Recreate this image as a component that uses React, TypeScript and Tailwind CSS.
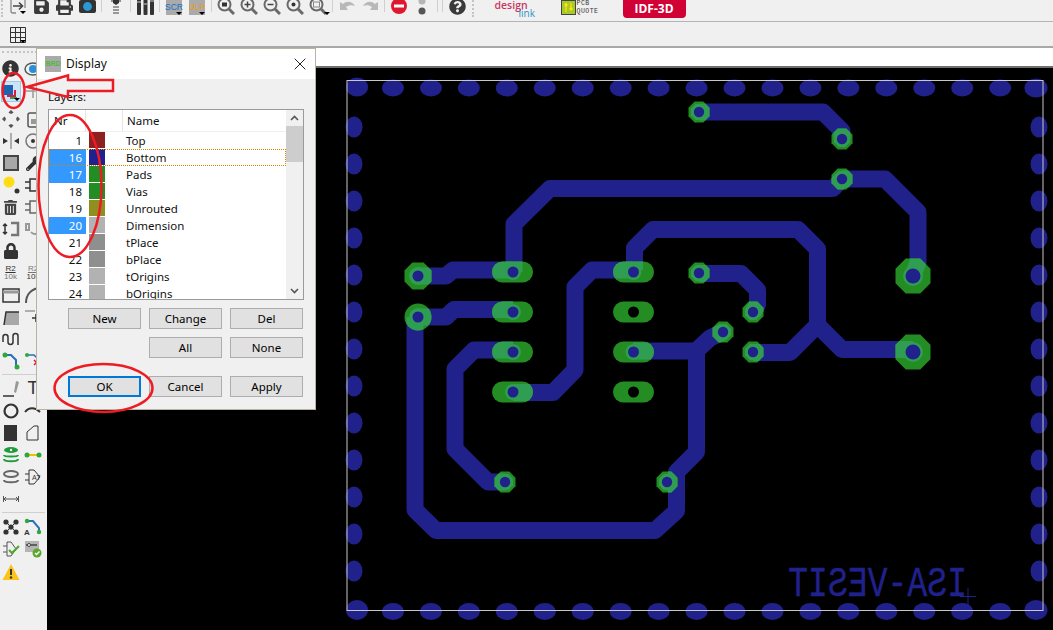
import type { ReactNode } from "react";
import { FaSave, FaPrint, FaInfoCircle, FaTrashAlt, FaLock, FaQuestionCircle, FaWrench } from "react-icons/fa";
import { X } from "lucide-react";

const BLUE = "#21218c";
const GREEN = "#238c23";
const LIGHT = "#2f9d52";
const INK = "#3a3a3a";

const octagon = (x: number, y: number, r: number) => {
  const k = r * 0.414;
  return [
    [x - k, y - r], [x + k, y - r], [x + r, y - k], [x + r, y + k],
    [x + k, y + r], [x - k, y + r], [x - r, y + k], [x - r, y - k],
  ].map((p) => p.join(",")).join(" ");
};

const traces = [
  "699,112 823,112 842,131 842,139",
  "842,179 885,179 918,212 918,262 913,276",
  "842,179 833,188.5 550,188.5 514,224 514,272",
  "418,276 446,276 453,270 513,270",
  "418,317 446,317 454,309.5 513,309.5",
  "415,317 415,510 436,530.5 655,530.5 676.5,511 676.5,472 696.5,452 696.5,351 633,351",
  "667,482 676,482",
  "696,351 710,338 723,332",
  "513,350 474,350 455,369 455,449 488,482 505,482",
  "513,392.5 553,392.5 575,370 575,287 592,270 634,270",
  "634.5,270 634.5,248 653,229.5 798,229.5 817.5,249 817.5,325 842,349.5 913,349.5",
  "817.5,325 790,352.5 753,352.5",
  "699,273.5 741,273.5 757.5,290 757.5,305 753,312",
];

const slots = [272, 312, 352, 392];
const vias: [number, number][] = [
  [699, 112], [842, 139], [842, 179], [699, 273], [753, 312], [723, 332], [753, 352], [505, 482], [667, 482],
];
const bigPads: [number, number][] = [[913, 276], [913, 352]];
const topRow = Array.from({ length: 17 }, (_, i) => 393 + i * 37.95);
const sideRow = Array.from({ length: 13 }, (_, i) => 127 + i * 37);

function Board() {
  const padShapes = (
    <>
      {[512.5, 633.5].flatMap((x) =>
        slots.map((y) => <rect key={`${x}-${y}`} x={x - 20.5} y={y - 10.5} width={41} height={21} rx={10.5} />)
      )}
      {bigPads.map(([x, y]) => <polygon key={x + "-" + y} points={octagon(x, y, 17.5)} />)}
      <polygon points={octagon(418, 276, 13.5)} />
      <circle cx={418} cy={317} r={13.5} />
      {vias.map(([x, y]) => <polygon key={x + "_" + y} points={octagon(x, y, 10.5)} />)}
    </>
  );
  return (
    <svg viewBox="47 68 1006 562" className="block w-full h-full">
      <defs>
        <clipPath id="pads">{padShapes}</clipPath>
      </defs>
      <g fill={BLUE}>
        {topRow.map((x) => <ellipse key={x} cx={x} cy={88} rx={11} ry={8.5} />)}
        {topRow.map((x) => <ellipse key={x} cx={x} cy={611.5} rx={11} ry={8.5} />)}
        {sideRow.map((y) => <ellipse key={y} cx={354} cy={y} rx={8.5} ry={10.5} />)}
        {sideRow.map((y) => <ellipse key={y} cx={1039} cy={y} rx={8.5} ry={10.5} />)}
        <ellipse cx={357} cy={87} rx={11} ry={9.5} />
        <ellipse cx={1036} cy={88} rx={11.5} ry={9.5} />
        <ellipse cx={357} cy={610} rx={11} ry={10} />
        <ellipse cx={1036} cy={610} rx={11.5} ry={10} />
      </g>
      <rect x={347} y={80.5} width={696} height={530} fill="none" stroke="#c8c8c8" strokeWidth={1} />
      <g fill="none" stroke={BLUE} strokeWidth={17} strokeLinejoin="round">
        {traces.map((t) => <polyline key={t} points={t} />)}
      </g>
      <g fill={GREEN}>{padShapes}</g>
      <g clipPath="url(#pads)" fill="none" stroke={LIGHT} strokeWidth={17} strokeLinejoin="round">
        {traces.map((t) => <polyline key={t} points={t} />)}
      </g>
      <g fill={LIGHT}>
        {vias.map(([x, y]) => <polygon key={x + "|" + y} points={octagon(x, y, 8)} />)}
        {bigPads.map(([x, y]) => <circle key={x + "|" + y} cx={x} cy={y} r={10} />)}
        {slots.map((y) => <circle key={y} cx={513} cy={y} r={8} />)}
        <circle cx={633.5} cy={272} r={8} />
        <circle cx={633.5} cy={352} r={8} />
        <circle cx={418} cy={276} r={9} />
        <circle cx={418} cy={317} r={9} />
      </g>
      <g fill={BLUE}>
        {vias.map(([x, y]) => <circle key={x + "/" + y} cx={x} cy={y} r={5.2} />)}
        {bigPads.map(([x, y]) => <circle key={x + "/" + y} cx={x} cy={y} r={7.5} />)}
        {slots.map((y) => <circle key={y} cx={513} cy={y} r={5.5} />)}
        <circle cx={633.5} cy={272} r={5.5} />
        <circle cx={633.5} cy={352} r={5.5} />
        <circle cx={418} cy={276} r={5.5} />
        <circle cx={418} cy={317} r={5.5} />
      </g>
      <circle cx={633.5} cy={312} r={5.5} fill="#000" />
      <circle cx={633.5} cy={392} r={5.5} fill="#000" />
      {/* mirrored bottom layer text */}
      <text
        transform="translate(967 596) scale(-1 1)"
        x={0}
        y={0}
        fill={BLUE}
        stroke={BLUE}
        strokeWidth={0.4}
        fontFamily="'Liberation Mono', monospace"
        fontSize={42}
        textLength={179}
        lengthAdjust="spacingAndGlyphs"
      >
        ISA-VESIT
      </text>
      <path d="M960 596.5h16M968 588v17" stroke={BLUE} strokeWidth={1} />
    </svg>
  );
}

function Drop() {
  return <span className="absolute right-0 bottom-0 w-0 h-0 border-x-[3px] border-t-[3px] border-x-transparent border-t-black" />;
}

function Cell({ children }: { children?: ReactNode }) {
  return <div className="relative w-[23px] h-[18px] flex items-center justify-center shrink-0">{children}</div>;
}

function Sep({ w = 6 }: { w?: number }) {
  return (
    <div className={w === 12 ? "w-[12px] flex justify-center gap-[4px]" : "w-[6px] flex justify-center"}>
      <div className="w-px h-[15px] bg-[#cfcfcf]" />
      {w === 12 && <div className="w-px h-[15px] bg-[#cfcfcf]" />}
    </div>
  );
}

function Zoom({ mark }: { mark: string }) {
  return (
    <svg width="18" height="18" viewBox="0 0 18 18" fill="none" stroke="#6a6a6a" strokeWidth="2">
      <circle cx="7.5" cy="7.5" r="6" />
      <path d="M12 12l5 5" strokeWidth="3" />
      {mark === "all" && <rect x="5" y="5.5" width="5" height="4" fill="#333" stroke="none" />}
      {mark === "plus" && <path d="M4.5 7.5h6M7.5 4.5v6" stroke="#444" strokeWidth="1.5" />}
      {mark === "minus" && <path d="M4.5 7.5h6" stroke="#444" strokeWidth="1.5" />}
      {mark === "fit" && <circle cx="7.5" cy="7.5" r="2" fill="#333" stroke="none" />}
      {mark === "sel" && <rect x="4.5" y="5" width="6" height="5" stroke="#888" strokeWidth="1" />}
    </svg>
  );
}

function TopBar() {
  return (
    <div className="h-[22px] bg-[#f0f0f0] border-b border-[#b4b4b4] overflow-hidden flex items-start">
      <div className="flex items-start -mt-[3px] w-full">
        <div className="w-[3px] h-[20px] ml-[1px] mr-[2.5px] border-l-2 border-dotted border-[#c4c4c4]" />
        <Cell>
          <svg width="16" height="18" viewBox="0 0 16 18" fill="none" stroke="#444" strokeWidth="1.3">
            <path d="M6 1H3a2 2 0 0 0-2 2v11a2 2 0 0 0 2 2h3M10 1h3a2 2 0 0 1 2 2v8" stroke="#888" />
            <path d="M3 9h9M9 5.5L12.5 9 9 12.5" strokeWidth="1.6" />
            <path d="M10 14h6l-3 3z" fill="#000" stroke="none" />
          </svg>
        </Cell>
        <Cell><FaSave size={17} color={INK} /></Cell>
        <Cell><FaPrint size={17} color={INK} /></Cell>
        <Cell>
          <svg width="17" height="14" viewBox="0 0 17 14">
            <rect x="0" y="1" width="17" height="13" rx="2" fill="#333" />
            <circle cx="8.5" cy="7.5" r="4.4" fill="#2a9ad6" />
          </svg>
        </Cell>
        <Sep />
        <Cell>
          <svg width="10" height="18" viewBox="0 0 10 18">
            <path d="M2 1h6v5l-3 2-3-2z" fill="#333" />
            <path d="M0 4h2M8 4h2" stroke="#333" />
            <path d="M2 9h6v2H2zM2 12h6v2H2zM2 15h6v2H2z" fill="#999" />
          </svg>
        </Cell>
        <Sep />
        <Cell>
          <svg width="17" height="18" viewBox="0 0 17 18" fill="#333">
            <rect x="0" y="0" width="4" height="18" rx="1" />
            <rect x="6.5" y="0" width="4" height="18" rx="1" />
            <rect x="13" y="0" width="4" height="18" rx="1" />
            <path d="M0 5h4M6.5 7h4M13 4h4" stroke="#ccc" />
          </svg>
        </Cell>
        <Sep />
        <Cell>
          <div className="relative w-[16px] h-[18px] bg-[#aaaaaa] flex items-center justify-center pt-[3px] text-[8.5px] leading-none text-[#1a6fc4] font-['Liberation_Sans',sans-serif]">
            SCR<Drop />
          </div>
        </Cell>
        <Cell>
          <div className="relative w-[16px] h-[18px] bg-[#aaaaaa] flex items-center justify-center pt-[3px] text-[8.5px] leading-none text-[#ef9a20] font-['Liberation_Sans',sans-serif]">
            ULP<Drop />
          </div>
        </Cell>
        <Sep />
        <Cell><Zoom mark="all" /></Cell>
        <Cell><Zoom mark="plus" /></Cell>
        <Cell><Zoom mark="minus" /></Cell>
        <Cell><Zoom mark="fit" /></Cell>
        <Cell><Zoom mark="sel" /><Drop /></Cell>
        <Sep />
        <Cell>
          <svg width="17" height="14" viewBox="0 0 17 14" fill="#b8b8b8">
            <path d="M16 7c-2-4-8-6-12-2L1 3v8h8L7 8c3-2 6-2 9-1z" />
          </svg>
        </Cell>
        <Cell>
          <svg width="17" height="14" viewBox="0 0 17 14" fill="#b8b8b8">
            <path d="M1 7c2-4 8-6 12-2l3-2v8h-8l2-3c-3-2-6-2-9-1z" />
          </svg>
        </Cell>
        <Sep />
        <Cell>
          <svg width="16" height="16" viewBox="0 0 16 16">
            <circle cx="8" cy="8" r="8" fill="#e0182d" />
            <rect x="3" y="6.5" width="10" height="3" fill="#fff" />
          </svg>
        </Cell>
        <Cell>
          <svg width="8" height="18" viewBox="0 0 8 18">
            <circle cx="4" cy="4" r="3.5" fill="#b5b5b5" />
            <circle cx="4" cy="14" r="3.5" fill="#555" />
          </svg>
        </Cell>
        <Sep w={12} />
        <Cell><FaQuestionCircle size={17} color={INK} /></Cell>
        <div className="w-[3px] h-[20px] ml-[3px] border-l-2 border-dotted border-[#c4c4c4]" />
        <div className="relative w-[45px] h-[20px] ml-[20px] font-['Open_Sans',sans-serif] leading-none">
          <span className="absolute left-0 top-[3px] text-[10.5px] font-semibold text-[#c9365f]">design</span>
          <span className="absolute left-[24px] top-[11px] text-[10px] text-[#2f93c0]">link</span>
        </div>
        <div className="flex items-start ml-[21px] mt-[3px]">
          <div className="w-[15px] h-[15px] bg-[#a9c82a] border border-[#444] flex items-center justify-center">
            <svg width="11" height="11" viewBox="0 0 11 11" stroke="#ffe600" fill="#ffe600">
              <path d="M3 1v9M8 1v7" strokeWidth="1.2" />
              <circle cx="3" cy="3" r="1.2" />
              <circle cx="8" cy="7" r="1.2" />
            </svg>
          </div>
          <div className="ml-[1px] text-[6.5px] leading-[8px] tracking-[0.5px] text-[#333] font-['Liberation_Mono',monospace]">
            <div>PCB</div>
            <div>QUOTE</div>
          </div>
        </div>
        <div className="ml-[24px] w-[63px] h-[21px] bg-[#d10035] rounded-b-[4px] flex items-center justify-center pt-[3px] text-white text-[12px] font-bold font-['Open_Sans',sans-serif]">
          IDF-3D
        </div>
      </div>
    </div>
  );
}

function GridBar() {
  return (
    <div className="h-[26px] bg-[#f0f0f0] border-b-2 border-[#a8a8a8] flex items-center pl-[10px] pt-[2px]">
      <div className="relative w-[16px] h-[16px]">
        <svg width="16" height="16" viewBox="0 0 16 16" fill="none" stroke="#333">
          <path d="M.5.5h15v15H.5zM5.5.5v15M10.5.5v15M.5 5.5h15M.5 10.5h15" />
        </svg>
        <Drop />
      </div>
    </div>
  );
}

function Row({ a, b, h = 22 }: { a?: ReactNode; b?: ReactNode; h?: number }) {
  return (
    <div className="flex" style={{ height: h }}>
      <div className="w-[21px] flex items-center justify-center">{a}</div>
      <div className="w-[24px] flex items-center justify-center">{b}</div>
    </div>
  );
}

function Ico({ children, w = 18 }: { children: ReactNode; w?: number }) {
  return <svg width={w} height="18" viewBox={`0 0 ${w} 18`} fill="none" stroke="#333" strokeWidth="1.5">{children}</svg>;
}

function Sidebar() {
  return (
    <div className="w-[47px] shrink-0 bg-[#f0f0f0] pt-[3px] flex flex-col">
      <div className="h-[3px] mx-[2px] mb-[3px] border-t-2 border-dotted border-[#c4c4c4]" />
      <Row
        h={23}
        a={<FaInfoCircle size={17} color="#333" />}
        b={<Ico><ellipse cx="9" cy="9" rx="8" ry="6" stroke="#555" /><circle cx="9" cy="9" r="4" fill="#2a8fd6" stroke="none" /></Ico>}
      />
      <Row
        h={22}
        a={
          <div className="relative w-[20px] h-[21px] bg-[#cce4f7] border border-[#9ccbec]">
            <div className="absolute left-[1px] top-[3px] w-[10px] h-[10px] bg-[#1f63b0]" />
            <div className="absolute left-[5px] top-[13px] w-[9px] h-[2px] bg-[#e0183c]" />
            <div className="absolute left-[12px] top-[8px] w-[2px] h-[7px] bg-[#e0183c]" />
            <div className="absolute left-[8px] top-[15px] w-[7px] h-[2px] bg-[#2f9d52]" />
            <Drop />
          </div>
        }
        b={<Ico><path d="M9 2v14M2 9h14" stroke="#999" /></Ico>}
      />
      <div className="h-[6px]" />
      <Row
        a={<Ico><path d="M9 1v3M9 14v3M1 9h3M14 9h3M7 3l2-2 2 2M7 15l2 2 2-2M3 7L1 9l2 2M15 7l2 2-2 2" stroke="#555" /></Ico>}
        b={<Ico><rect x="4" y="3" width="11" height="14" rx="2" stroke="#555" /><rect x="7" y="9" width="5" height="5" fill="#999" stroke="none" /></Ico>}
      />
      <Row
        a={<Ico><path d="M9 1v16" stroke="#999" /><path d="M1 6l5 3-5 3zM17 6l-5 3 5 3z" fill="#333" stroke="none" /></Ico>}
        b={<Ico><circle cx="9" cy="9" r="7" stroke="#777" /><circle cx="9" cy="9" r="2" fill="#333" stroke="none" /></Ico>}
      />
      <Row
        a={<div className="w-[16px] h-[16px] bg-[#a8a8a8] border-2 border-[#444]" />}
        b={<FaWrench size={15} color="#333" />}
      />
      <Row
        a={<Ico><circle cx="7" cy="6" r="5.5" fill="#ffdc14" stroke="none" /><circle cx="15" cy="15" r="2.5" fill="#333" stroke="none" /></Ico>}
        b={<Ico><path d="M6 3h5a6 6 0 0 1 0 12H6zM1 6h5M1 12h5" /></Ico>}
      />
      <Row
        a={<FaTrashAlt size={15} color="#444" />}
        b={<Ico><path d="M6 3h5a6 6 0 0 1 0 12H6zM1 6h5M1 12h5" stroke="#666" /></Ico>}
      />
      <Row
        a={<Ico><path d="M3 4v10M1 6l2-2 2 2M1 12l2 2 2-2" stroke="#333" /><path d="M9 3h7v12H9" stroke="#777" strokeWidth="2.5" /></Ico>}
        b={<Ico><path d="M2 4h3v6H2zM7 12a5 5 0 0 0 9-3V3" stroke="#999" strokeWidth="2" /></Ico>}
      />
      <Row a={<FaLock size={16} color="#333" />} />
      <Row
        a={<div className="text-[8px] leading-[8px] text-center text-[#333] font-['Liberation_Sans',sans-serif]"><div className="underline">R2</div><div className="text-[#777]">10k</div></div>}
        b={<div className="text-[8px] leading-[8px] text-center text-[#777] font-['Liberation_Sans',sans-serif]"><div className="underline">R2</div><div className="text-[#333]">10k</div></div>}
      />
      <Row
        a={<Ico><rect x="1" y="3" width="16" height="13" stroke="#333" /><path d="M1 6h16" stroke="#999" strokeWidth="3" /></Ico>}
        b={<Ico><path d="M2 17C2 8 8 2 17 2" stroke="#555" strokeWidth="2" /></Ico>}
      />
      <Row
        a={<Ico><path d="M2 17l2-13h13v13z" fill="#a8a8a8" stroke="none" /><path d="M2 17l2-13h13" stroke="#333" /></Ico>}
        b={<Ico><path d="M1 3h10" stroke="#999" /><path d="M8 10h8M12 6v8" stroke="#333" /></Ico>}
      />
      <Row a={<Ico><path d="M1 12V7a2.5 2.5 0 0 1 5 0v5a2.5 2.5 0 0 0 5 0V6a2.5 2.5 0 0 1 5 0v9" stroke="#333" /></Ico>} />
      <Row
        a={<Ico><path d="M3 3h6l5 5v6" stroke="#2a6fb8" strokeWidth="2" /><circle cx="3" cy="3" r="2.5" fill="#2fa83a" stroke="none" /><circle cx="15" cy="15" r="2.5" fill="#2fa83a" stroke="none" /></Ico>}
        b={<Ico><path d="M3 3h7l3 3" stroke="#2a6fb8" strokeWidth="1.5" /><circle cx="3" cy="3" r="2" fill="#2fa83a" stroke="none" /><path d="M10 8l5 5M15 8l-5 5" stroke="#e0183c" /></Ico>}
      />
      <div className="h-[3px] mx-[2px] border-b border-[#cfcfcf]" />
      <div className="h-[2px]" />
      <Row
        a={<Ico><path d="M1 17h11" stroke="#333" /><path d="M14 2l3 1-3 11-2-1z" fill="#999" stroke="none" /></Ico>}
        b={<span className="text-[18px] leading-none text-[#333] font-['Liberation_Sans',sans-serif]">T</span>}
      />
      <Row
        h={23}
        a={<Ico><circle cx="9" cy="9" r="6.5" stroke="#333" strokeWidth="2.2" /></Ico>}
        b={<Ico><path d="M1 10c4-5 10-5 15 0" stroke="#333" strokeWidth="2" /></Ico>}
      />
      <Row
        a={<div className="w-[13px] h-[16px] bg-[#333]" />}
        b={<Ico><path d="M3 16V8l7-6h4v14z" stroke="#333" strokeWidth="1" /></Ico>}
      />
      <Row
        a={<Ico><ellipse cx="9" cy="4" rx="7" ry="3" fill="#1f9c3a" stroke="none" /><circle cx="9" cy="4" r="1.2" fill="#fff" stroke="none" /><path d="M2 9c0 2 14 2 14 0M2 13c0 3 14 3 14 0" stroke="#1f9c3a" strokeWidth="2" /></Ico>}
        b={<Ico><path d="M3 9h12" stroke="#f2c200" strokeWidth="2" /><circle cx="3" cy="9" r="2.5" fill="#2fa83a" stroke="none" /><circle cx="15" cy="9" r="2.5" fill="#2fa83a" stroke="none" /></Ico>}
      />
      <Row
        a={<Ico><ellipse cx="9" cy="6" rx="7" ry="3" stroke="#666" strokeWidth="2" /><path d="M2 12c0 3 14 3 14 0" stroke="#666" strokeWidth="2" /></Ico>}
        b={<Ico><path d="M5 2h5l6 7-6 7H5zM1 6h4M1 12h4" stroke="#333" strokeWidth="1" /><text x="8" y="12" fontSize="7" fill="#333" stroke="none" fontFamily="'Liberation Sans', sans-serif">AT</text></Ico>}
      />
      <Row
        a={<Ico><path d="M1.5 6v6M16.5 6v6M2 9h14" stroke="#555" strokeWidth="1" /><path d="M4 7l-2 2 2 2M14 7l2 2-2 2" stroke="#555" strokeWidth="1" /></Ico>}
      />
      <div className="h-[3px] mx-[2px] border-b border-[#cfcfcf]" />
      <div className="h-[3px]" />
      <Row
        a={<Ico><path d="M4 4l5 5M14 4L9 9M4 14l5-5M14 14L9 9" stroke="#333" strokeWidth="1" /><circle cx="4" cy="4" r="2.6" fill="#333" stroke="none" /><circle cx="14" cy="4" r="2.6" fill="#333" stroke="none" /><circle cx="9" cy="9" r="2.6" fill="#333" stroke="none" /><circle cx="4" cy="14" r="2.6" fill="#333" stroke="none" /><circle cx="14" cy="14" r="2.6" fill="#333" stroke="none" /></Ico>}
        b={<Ico><path d="M3 3h6l6 7v3" stroke="#2a6fb8" strokeWidth="2" /><circle cx="3" cy="3" r="2.2" fill="#2fa83a" stroke="none" /><circle cx="15" cy="14" r="2.2" fill="#2fa83a" stroke="none" /><text x="0" y="17" fontSize="8" fill="#333" stroke="none" fontWeight="bold" fontFamily="'Liberation Sans', sans-serif">A</text></Ico>}
      />
      <Row
        a={<Ico><path d="M5 2h4l5 7-5 7H5zM1 6h4M1 12h4" stroke="#555" strokeWidth="1" /><path d="M7 10l3 3 7-7" stroke="#4aa82a" strokeWidth="2" /></Ico>}
        b={<Ico><rect x="1" y="1" width="14" height="11" fill="#b5b5b5" stroke="none" /><path d="M2 5h11" stroke="#444" /><circle cx="5" cy="5" r="1.5" fill="#fff" stroke="#444" strokeWidth="1" /><circle cx="13" cy="13" r="4.5" fill="#5aa82a" stroke="none" /><path d="M11 13l1.5 1.5 3-3" stroke="#fff" /></Ico>}
      />
      <Row
        h={24}
        a={<Ico><path d="M9 1l8.5 16H.5z" fill="#fcc419" stroke="none" /><path d="M9 6v6" stroke="#333" strokeWidth="2" /><circle cx="9" cy="14.5" r="1.2" fill="#333" stroke="none" /></Ico>}
      />
    </div>
  );
}

const layers = [
  { nr: 1, name: "Top", color: "bg-[#8f2020]" },
  { nr: 16, name: "Bottom", color: "bg-[#20208f]", on: true, focus: true },
  { nr: 17, name: "Pads", color: "bg-[#238c23]", on: true },
  { nr: 18, name: "Vias", color: "bg-[#238c23]" },
  { nr: 19, name: "Unrouted", color: "bg-[#8f8f20]" },
  { nr: 20, name: "Dimension", color: "bg-[#b2b2b2]", on: true },
  { nr: 21, name: "tPlace", color: "bg-[#8f8f8f]" },
  { nr: 22, name: "bPlace", color: "bg-[#8f8f8f]" },
  { nr: 23, name: "tOrigins", color: "bg-[#b2b2b2]" },
  { nr: 24, name: "bOrigins", color: "bg-[#b2b2b2]" },
];

function Btn({ label, primary }: { label: string; primary?: boolean }) {
  return (
    <button
      className={
        primary
          ? "w-[73px] h-[21px] bg-[#e1e1e1] border-2 border-[#0078d7] text-[11.5px] text-black"
          : "w-[73px] h-[21px] bg-[#e1e1e1] border border-[#adadad] text-[11.5px] text-black"
      }
    >
      {label}
    </button>
  );
}

function DisplayDialog() {
  return (
    <div className="absolute left-[36px] top-[48px] w-[280px] h-[362px] bg-[#f0f0f0] border border-[#b9b3a4] font-['Noto_Sans',sans-serif] text-[#111] flex flex-col">
      <div className="h-[30px] bg-white flex items-center pl-[8px] pr-[5px] shrink-0">
        <div className="w-[16px] h-[16px] bg-[#aaaaaa] flex items-center justify-center text-[7px] font-bold text-[#4fb83a] font-['Liberation_Sans',sans-serif]">BRD</div>
        <span className="ml-[5px] text-[12px]">Display</span>
        <X size={20} strokeWidth={1.2} className="ml-auto text-[#222]" />
      </div>
      <div className="pl-[11px] text-[11.5px] leading-[14px] mt-[11px]">Layers:</div>
      <div className="ml-[11px] mt-[5px] w-[256px] h-[191px] bg-white border border-[#9a9a9a] flex overflow-hidden">
        <div className="flex-1 min-w-0 flex flex-col overflow-hidden">
          <div className="flex h-[22px] shrink-0 text-[11.5px] items-center border-b border-[#f0f0f0]">
            <div className="w-[37px] h-full border-r border-[#e5e5e5] pl-[5px] flex items-center">Nr</div>
            <div className="w-[37px] h-full border-r border-[#e5e5e5]" />
            <div className="pl-[4px]">Name</div>
          </div>
          {layers.map((l) => (
            <div key={l.nr} className="relative flex h-[17px] shrink-0 text-[11.5px] leading-[17px]">
              <div className={l.on ? "w-[37px] pr-[4px] text-right bg-[#3399ff] text-white" : "w-[37px] pr-[4px] text-right"}>{l.nr}</div>
              <div className={`ml-[3px] w-[16px] h-[16px] ${l.color}`} />
              <div className="ml-[21px]">{l.name}</div>
              {l.focus && <div className="absolute inset-0 border border-dotted border-[#e08000]" />}
            </div>
          ))}
        </div>
        <div className="w-[17px] shrink-0 bg-[#f0f0f0] flex flex-col items-center">
          <div className="h-[16px] flex items-center justify-center">
            <svg width="9" height="6" viewBox="0 0 9 6" fill="none" stroke="#555" strokeWidth="1.6"><path d="M1 5l3.5-3.5L8 5" /></svg>
          </div>
          <div className="w-full h-[36px] bg-[#cdcdcd]" />
          <div className="mt-auto h-[16px] flex items-center justify-center">
            <svg width="9" height="6" viewBox="0 0 9 6" fill="none" stroke="#555" strokeWidth="1.6"><path d="M1 1l3.5 3.5L8 1" /></svg>
          </div>
        </div>
      </div>
      <div className="mt-[8px] ml-[31px] flex gap-x-[8px]">
        <Btn label="New" />
        <Btn label="Change" />
        <Btn label="Del" />
      </div>
      <div className="mt-[8px] ml-[112px] flex gap-x-[8px]">
        <Btn label="All" />
        <Btn label="None" />
      </div>
      <div className="mt-[18px] ml-[31px] flex gap-x-[8px]">
        <Btn label="OK" primary />
        <Btn label="Cancel" />
        <Btn label="Apply" />
      </div>
    </div>
  );
}

function Annotations() {
  return (
    <svg className="absolute left-0 top-0 pointer-events-none" width="1053" height="630" fill="none" stroke="#ed1c24" strokeWidth="2.5">
      <ellipse cx="13.5" cy="90.5" rx="11" ry="17.5" />
      <ellipse cx="70" cy="186" rx="31.5" ry="71" />
      <ellipse cx="103.5" cy="388" rx="49" ry="24" />
      <path d="M27 87L68 75.5V80H113V91H68V97Z" />
    </svg>
  );
}

export default function App() {
  return (
    <div className="relative w-[1053px] h-[630px] overflow-hidden bg-[#f0f0f0]">
      <TopBar />
      <GridBar />
      <div className="flex h-[582px]">
        <Sidebar />
        <div className="flex-1 flex flex-col min-w-0">
          <div className="h-[20px] bg-white border-b-2 border-[#707070] shrink-0" />
          <div className="flex-1 bg-black min-h-0">
            <Board />
          </div>
        </div>
      </div>
      <DisplayDialog />
      <Annotations />
    </div>
  );
}
